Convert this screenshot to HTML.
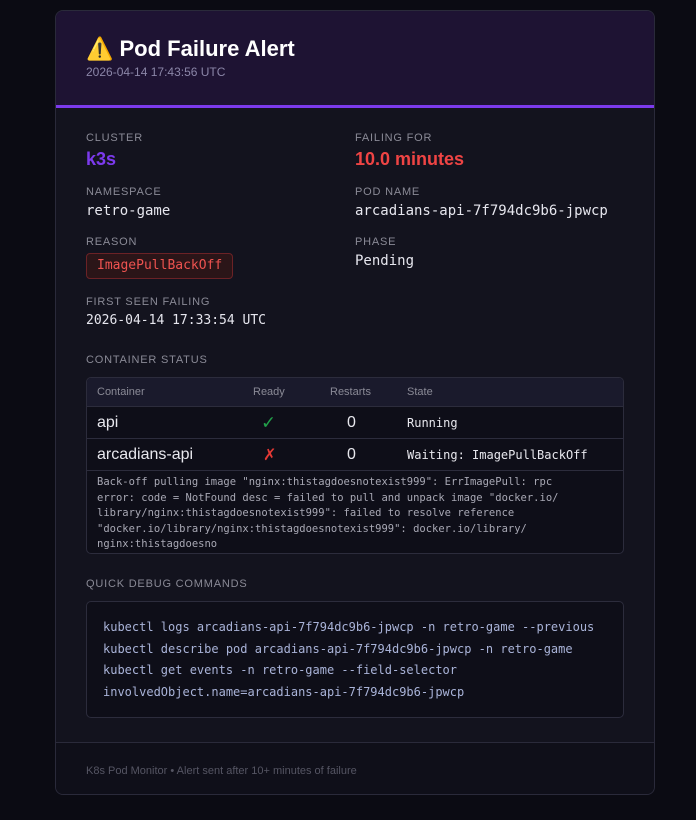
<!DOCTYPE html>
<html><head><meta charset="utf-8"><style>
*{box-sizing:border-box;margin:0;padding:0}
body{width:696px;height:820px;background:#0b0b13;font-family:"Liberation Sans","DejaVu Sans",sans-serif;overflow:hidden}
.card{position:absolute;left:55px;top:10px;width:600px;height:785px;background:#13131e;border:1px solid #2a2a3a;border-radius:8px;overflow:hidden}
.hdr{height:97px;background:#1e1333;border-bottom:3px solid #7c3aed;padding:24px 30px 0}
.hdr h1{font-size:22px;color:#fff;font-weight:bold;line-height:28px}
.hdr .ts{font-size:12px;color:#8b86a8;margin-top:2px}
.lbl{position:absolute;font-size:11px;letter-spacing:0.8px;color:#8a8a96;text-transform:uppercase}
.val{position:absolute;font-family:"DejaVu Sans Mono",monospace;font-size:14px;color:#e6e6ee}
.mono{font-family:"DejaVu Sans Mono",monospace}
.tbl{position:absolute;left:30px;top:366px;width:538px;height:177px;border:1px solid #2c2c3c;border-radius:5px;overflow:hidden;background:#0e0e18}
.th{height:28px;background:#1a1a2c;font-size:11px;color:#8a8a96;position:relative}
.row{height:32px;border-top:1px solid #2c2c3c;position:relative;color:#e8e8ee}
.row span,.th span{position:absolute;top:50%;transform:translateY(-50%)}
.err{border-top:1px solid #2c2c3c;padding:4px 10px;font-family:"DejaVu Sans Mono",monospace;font-size:10.5px;line-height:15.5px;color:#a8a8b4}
.cmd{position:absolute;left:30px;top:590px;width:538px;height:117px;border:1px solid #2c2c3c;border-radius:5px;background:#0e0e18;padding:15px 16px;font-family:"DejaVu Sans Mono",monospace;font-size:12px;line-height:21.7px;color:#a9b3d8}
.foot{position:absolute;left:0;top:731px;width:100%;height:54px;border-top:1px solid #2a2a3a;background:#0f0f19;padding:22px 30px;font-size:11px;color:#555563}
</style></head><body>
<div class="card">
 <div class="hdr"><h1>⚠️ Pod Failure Alert</h1><div class="ts">2026-04-14 17:43:56 UTC</div></div>
 <div class="lbl" style="left:30px;top:121px">Cluster</div>
 <div style="position:absolute;left:30px;top:138px;font-size:18px;font-weight:bold;color:#7c3aed">k3s</div>
 <div class="lbl" style="left:299px;top:121px">Failing for</div>
 <div style="position:absolute;left:299px;top:138px;font-size:18px;font-weight:bold;color:#ef4444">10.0 minutes</div>
 <div class="lbl" style="left:30px;top:175px">Namespace</div>
 <div class="val" style="left:30px;top:192px">retro-game</div>
 <div class="lbl" style="left:299px;top:175px">Pod name</div>
 <div class="val" style="left:299px;top:192px">arcadians-api-7f794dc9b6-jpwcp</div>
 <div class="lbl" style="left:30px;top:225px">Reason</div>
 <div class="mono" style="position:absolute;left:30px;top:242px;height:26px;padding:0 10px;line-height:24px;font-size:13px;color:#ef5350;background:#2b1518;border:1px solid #6b2226;border-radius:4px">ImagePullBackOff</div>
 <div class="lbl" style="left:299px;top:225px">Phase</div>
 <div class="val" style="left:299px;top:242px">Pending</div>
 <div class="lbl" style="left:30px;top:285px">First seen failing</div>
 <div class="val" style="left:30px;top:302px;font-size:13px">2026-04-14 17:33:54 UTC</div>
 <div class="lbl" style="left:30px;top:343px">Container status</div>
 <div class="tbl">
  <div class="th"><span style="left:10px">Container</span><span style="left:166px">Ready</span><span style="left:243px">Restarts</span><span style="left:320px">State</span></div>
  <div class="row"><span style="left:10px;font-size:16px">api</span><span style="left:174px;color:#22a04a;font-size:18px">✓</span><span style="left:260px;font-size:16px">0</span><span class="mono" style="left:320px;font-size:12px">Running</span></div>
  <div class="row"><span style="left:10px;font-size:16px">arcadians-api</span><span style="left:176px;color:#e53935;font-size:16px">✗</span><span style="left:260px;font-size:16px">0</span><span class="mono" style="left:320px;font-size:12px">Waiting: ImagePullBackOff</span></div>
  <div class="err">Back-off pulling image "nginx:thistagdoesnotexist999": ErrImagePull: rpc<br>error: code = NotFound desc = failed to pull and unpack image "docker.io/<br>library/nginx:thistagdoesnotexist999": failed to resolve reference<br>"docker.io/library/nginx:thistagdoesnotexist999": docker.io/library/<br>nginx:thistagdoesno</div>
 </div>
 <div class="lbl" style="left:30px;top:567px">Quick debug commands</div>
 <div class="cmd">kubectl logs arcadians-api-7f794dc9b6-jpwcp -n retro-game --previous<br>kubectl describe pod arcadians-api-7f794dc9b6-jpwcp -n retro-game<br>kubectl get events -n retro-game --field-selector<br>involvedObject.name=arcadians-api-7f794dc9b6-jpwcp</div>
 <div class="foot">K8s Pod Monitor • Alert sent after 10+ minutes of failure</div>
</div>
</body></html>
